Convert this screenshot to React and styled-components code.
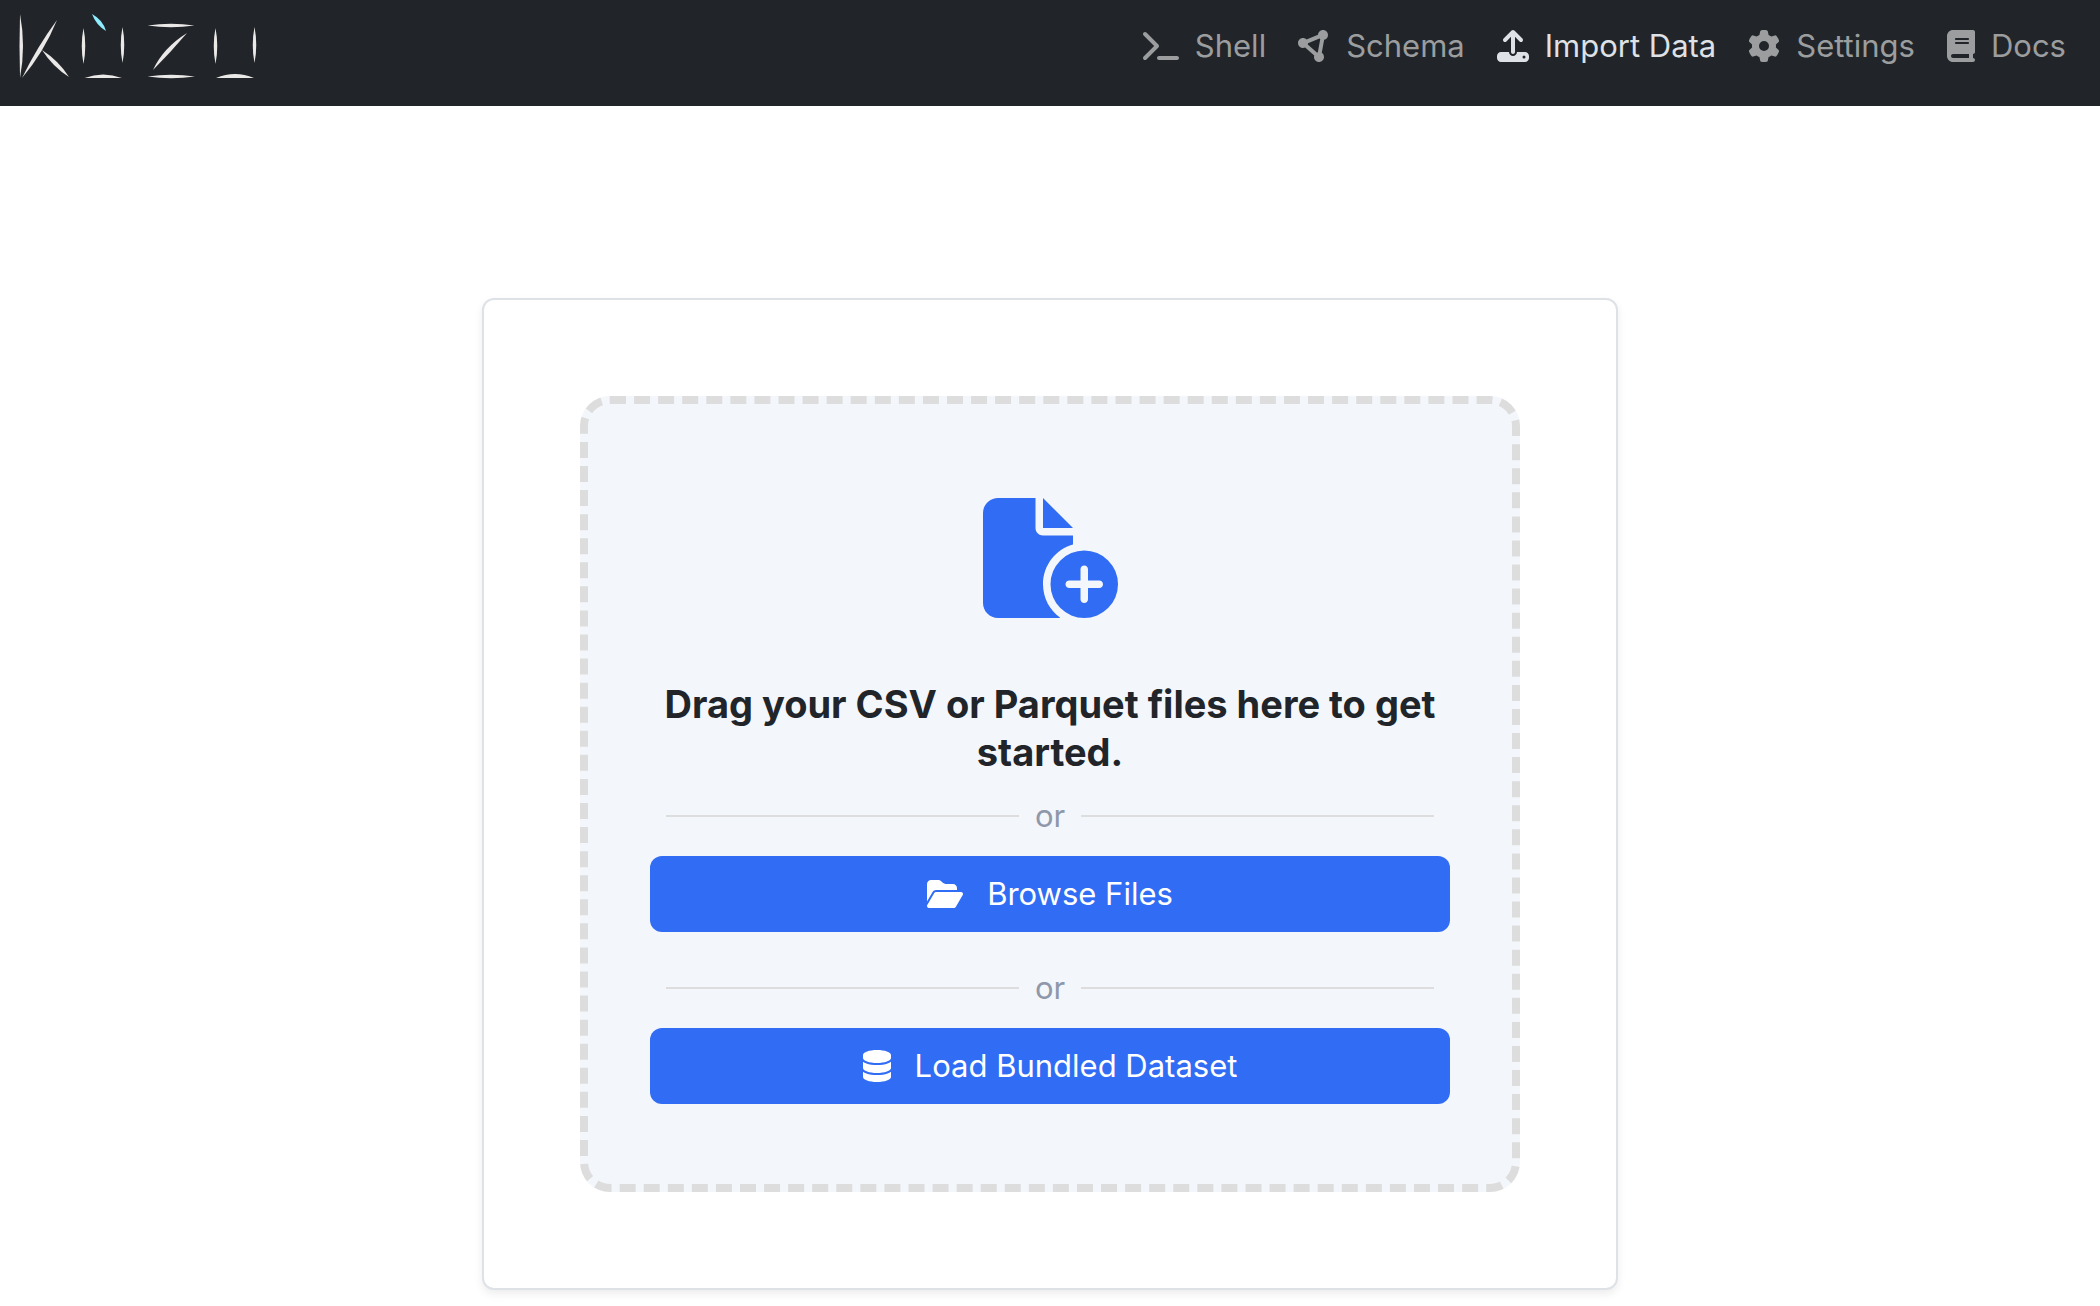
import React from "react";
import styled, { createGlobalStyle } from "styled-components";
import {
  FaTerminal,
  FaCircleNodes,
  FaUpload,
  FaGear,
  FaBook,
  FaFileCirclePlus,
  FaFolderOpen,
  FaDatabase,
} from "react-icons/fa6";

const GlobalStyle = createGlobalStyle`
  *, *::before, *::after { box-sizing: border-box; }
  body {
    margin: 0;
    background: #ffffff;
    color: #212529;
    font-family: Inter, "Liberation Sans", sans-serif;
    font-size: 31px;
    line-height: 48px;
  }
`;

const Navbar = styled.header`
  display: flex;
  align-items: center;
  justify-content: space-between;
  padding: 6px 18px 20px 16px;
  background: #212529;
`;

const Brand = styled.a`
  display: flex;
`;

const Nav = styled.nav`
  display: flex;
`;

const IconSlot = styled.span`
  display: flex;
  justify-content: center;
  width: ${({ $width }) => $width}px;

  svg {
    width: 100%;
    height: 32px;
  }
`;

const NavLink = styled.a`
  display: flex;
  align-items: center;
  gap: 16px;
  padding: 0 16px;
  color: ${({ $active }) => ($active ? "#dee2e6" : "#9b9d9f")};
  text-decoration: none;
  white-space: nowrap;
`;

const Main = styled.main`
  display: flex;
  justify-content: center;
  padding: 192px 16px 16px;
`;

const Card = styled.section`
  width: 100%;
  max-width: 1136px;
  padding: 96px;
  background: #ffffff;
  border: 2px solid #dee2e6;
  border-radius: 12px;
  box-shadow: 0 4px 8px rgba(0, 0, 0, 0.075);
`;

const DropZone = styled.div`
  display: flex;
  flex-direction: column;
  align-items: center;
  padding: 94px 62px 80px;
  background: #f3f6fb;
  border: 8px dashed #dddddd;
  border-radius: 30px;
`;

const DropIcon = styled(FaFileCirclePlus)`
  width: 135px;
  height: 120px;
  color: #316cf4;
`;

const Title = styled.h1`
  margin: 62px 0 16px;
  font-size: 38px;
  font-weight: 700;
  line-height: 48px;
  text-align: center;
`;

const Divider = styled.div`
  display: flex;
  align-items: center;
  align-self: stretch;
  gap: 16px;
  padding: 0 16px;
  color: #8f98aa;

  &::before,
  &::after {
    content: "";
    flex: 1;
    height: 2px;
    background: #dddddd;
  }
`;

const Action = styled.button`
  display: flex;
  align-items: center;
  justify-content: center;
  align-self: stretch;
  gap: 24px;
  margin: 16px 0 0;
  padding: 14px 24px;
  border: 0;
  border-radius: 12px;
  background: #316cf4;
  color: #ffffff;
  font: inherit;
  cursor: pointer;

  & + ${Divider} {
    margin-top: 32px;
  }
`;

const links = [
  { label: "Shell", Icon: FaTerminal, width: 36 },
  { label: "Schema", Icon: FaCircleNodes, width: 32 },
  { label: "Import Data", Icon: FaUpload, width: 32, active: true },
  { label: "Settings", Icon: FaGear, width: 32 },
  { label: "Docs", Icon: FaBook, width: 28 },
];

function Logo() {
  return (
    <svg width="244" height="80" viewBox="16 6 244 80" role="img" aria-label="Kuzu">
      <g fill="#ebe9e7">
        <path d="M20 14Q26 46 20 78Q19 46 20 14Z" />
        <path d="M57 20Q44 52 22 78Q37 47 57 20Z" />
        <path d="M42 50Q59 61 69 77Q53 67 42 50Z" />
        <path d="M83.5 28Q87 46 83.5 64Q80 46 83.5 28Z" />
        <path d="M122.500 27Q126 45 122.500 63Q119 45 122.500 27Z" />
        <path d="M84.500 78Q103 71 122 78Z" />
        <path d="M147.500 25.500Q171 22 194.500 25.500Q171 29 147.500 25.500Z" />
        <path d="M187 33Q170 53 153 70Q163 48 187 33Z" />
        <path d="M147.500 76.500Q171 73 195 76.500Q171 80 147.500 76.500Z" />
        <path d="M215.500 28Q219 46 215.500 64Q212 46 215.500 28Z" />
        <path d="M254.500 27Q258 45 254.500 63Q251 45 254.500 27Z" />
        <path d="M216 78Q235 70 254 78Z" />
      </g>
      <path fill="#8deeff" d="M92 14Q103 20 106 31Q96 25 92 14Z" />
    </svg>
  );
}

export default function App() {
  return (
    <>
      <GlobalStyle />
      <Navbar>
        <Brand href="#">
          <Logo />
        </Brand>
        <Nav>
          {links.map(({ label, Icon, width, active }) => (
            <NavLink
              key={label}
              href="#"
              $active={active}
              aria-current={active ? "page" : undefined}
            >
              <IconSlot $width={width}>
                <Icon aria-hidden="true" />
              </IconSlot>
              {label}
            </NavLink>
          ))}
        </Nav>
      </Navbar>
      <Main>
        <Card>
          <DropZone>
            <DropIcon aria-hidden="true" />
            <Title>Drag your CSV or Parquet files here to get started.</Title>
            <Divider>or</Divider>
            <Action type="button">
              <IconSlot $width={36}>
                <FaFolderOpen aria-hidden="true" />
              </IconSlot>
              Browse Files
            </Action>
            <Divider>or</Divider>
            <Action type="button">
              <IconSlot $width={28}>
                <FaDatabase aria-hidden="true" />
              </IconSlot>
              Load Bundled Dataset
            </Action>
          </DropZone>
        </Card>
      </Main>
    </>
  );
}
